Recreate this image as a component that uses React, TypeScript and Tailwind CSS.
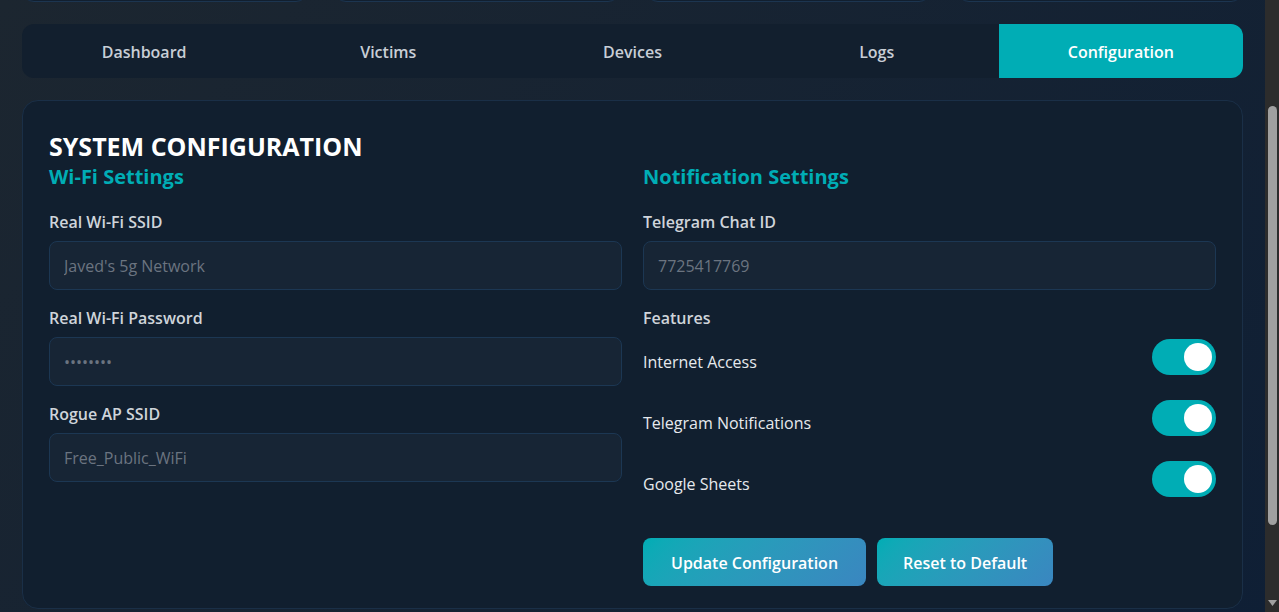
import { useLayoutEffect, useRef } from "react";

const tabs = ["Dashboard", "Victims", "Devices", "Logs", "Configuration"];

const wifiFields = [
  { label: "Real Wi-Fi SSID", placeholder: "Javed's 5g Network" },
  { label: "Real Wi-Fi Password", placeholder: "••••••••" },
  { label: "Rogue AP SSID", placeholder: "Free_Public_WiFi" },
];

const features = ["Internet Access", "Telegram Notifications", "Google Sheets"];

function Field({ label, placeholder }: { label: string; placeholder: string }) {
  return (
    <div className="mb-[15px]">
      <label className="mb-[7px] block pt-px text-base font-semibold leading-6 text-[#cfd4da]">{label}</label>
      <input
        type="text"
        placeholder={placeholder}
        className="h-[49px] w-full rounded-lg border border-[#1c3753] bg-[#172535] px-[14px] text-base text-[#c9d1d9] outline-none placeholder:text-[#6b7480]"
      />
    </div>
  );
}

function Toggle() {
  return (
    <div className="flex h-9 w-16 items-center justify-end rounded-full bg-[#00adb5] px-1">
      <div className="h-7 w-7 rounded-full bg-white" />
    </div>
  );
}

export default function App() {
  const scrollRef = useRef<HTMLDivElement | null>(null);

  useLayoutEffect(() => {
    if (scrollRef.current) scrollRef.current.scrollTop = 155;
  }, []);

  return (
    <div className="flex h-[612px] bg-linear-135 from-[#1c2630] to-[#0f1f35] font-['Open_Sans',sans-serif]">
      <div ref={scrollRef} className="h-full flex-1 overflow-y-scroll">
        <div className="px-[22px] pt-5">
          {/* Header (scrolled out of view) */}
          <div className="mb-3 h-14" />

          {/* Stat cards */}
          <div className="grid grid-cols-4 gap-[26px]">
            {[0, 1, 2, 3].map((i) => (
              <div key={i} className="h-[69px] rounded-xl border border-[#1c3550] bg-[#111f2f]" />
            ))}
          </div>

          {/* Tabs */}
          <div className="mt-[22px] grid grid-cols-5 overflow-hidden rounded-xl bg-[#121f2e]">
            {tabs.map((t) => (
              <button
                key={t}
                className={`pb-[14px] pt-4 text-base font-semibold leading-6 ${
                  t === "Configuration" ? "bg-[#00adb5] text-white" : "text-[#c8ced6]"
                }`}
              >
                {t}
              </button>
            ))}
          </div>

          {/* Configuration card */}
          <section className="mt-[22px] rounded-2xl border border-[#1a2f47] bg-[#111f2f] p-[26px] pb-[22px]">
            <h2 className="mt-px text-[25px] font-bold leading-9 text-white">SYSTEM CONFIGURATION</h2>

            <div className="grid grid-cols-2 gap-[21px]">
              <div>
                <h3 className="mb-[19px] text-xl font-bold leading-[26px] text-[#00adb5]">Wi-Fi Settings</h3>
                {wifiFields.map((f) => (
                  <Field key={f.label} {...f} />
                ))}
              </div>

              <div>
                <h3 className="mb-[19px] text-xl font-bold leading-[26px] text-[#00adb5]">Notification Settings</h3>
                <Field label="Telegram Chat ID" placeholder="7725417769" />

                <label className="mb-[9px] block pt-px text-base font-semibold leading-6 text-[#cfd4da]">Features</label>
                <div className="flex flex-col gap-[25px]">
                  {features.map((f) => (
                    <div key={f} className="flex items-center justify-between">
                      <span className="mt-2.5 text-base leading-6 text-[#e6e9ed]">{f}</span>
                      <Toggle />
                    </div>
                  ))}
                </div>

                <div className="mt-[41px] flex gap-[11px]">
                  <button className="h-12 rounded-lg bg-linear-135 from-[#00adb5] to-[#3a86c0] px-7 pt-px text-base font-semibold text-white">
                    Update Configuration
                  </button>
                  <button className="h-12 rounded-lg bg-linear-135 from-[#00adb5] to-[#3a86c0] px-[26px] pt-px text-base font-semibold text-white">
                    Reset to Default
                  </button>
                </div>
              </div>
            </div>
          </section>

          <div className="h-[130px]" />
        </div>
      </div>

      {/* Scrollbar */}
      <div className="flex w-[14px] flex-col bg-[#2c2c2c] pl-[3px]">
        <div className="h-[106px]" />
        <div className="h-[419px] w-[9px] rounded-full bg-[#a0a0a0]" />
        <div className="flex-1" />
        <svg width="9" height="7" viewBox="0 0 9 7" className="mb-[5px]">
          <path d="M0 0 H9 L4.5 6 Z" fill="#a0a0a0" />
        </svg>
      </div>
    </div>
  );
}
